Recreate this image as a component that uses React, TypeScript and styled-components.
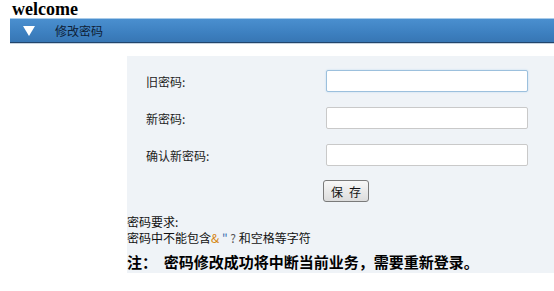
import React from 'react';
import styled, { createGlobalStyle } from 'styled-components';

const GlobalStyle = createGlobalStyle`
  html, body {
    margin: 0;
    padding: 0;
    background: #fff;
  }
  body {
    font-family: "Noto Sans CJK SC", "Liberation Sans", sans-serif;
    font-size: 12px;
    color: #222;
  }
`;

const Page = styled.div`
  width: 554px;
  height: 291px;
  overflow: hidden;
`;

const Title = styled.h1`
  margin: 0;
  padding: 0 0 0 12px;
  height: 18px;
  font-family: "Liberation Serif", serif;
  font-size: 18px;
  font-weight: bold;
  line-height: 18px;
  color: #000;
`;

const HeaderBar = styled.div`
  margin-left: 10px;
  height: 23px;
  display: flex;
  align-items: center;
  border-top: 1px solid #a9cbe9;
  border-bottom: 1px solid #22456b;
  background: linear-gradient(#4a8fcf, #3d80c0 60%, #3776b4);
  box-shadow: 0 1px 0 #c6d3e0;
`;

const Arrow = styled.span`
  width: 0;
  height: 0;
  margin-left: 13px;
  border-left: 6px solid transparent;
  border-right: 6px solid transparent;
  border-top: 10px solid #fff;
`;

const BarText = styled.span`
  margin-left: 20px;
  font-size: 12px;
  color: #0e2036;
  line-height: 23px;
`;

const Panel = styled.div`
  margin: 13px 0 0 127px;
  padding: 14px 0 2px 0;
  background: #eff3f7;
`;

const FormGrid = styled.div`
  display: grid;
  grid-template-columns: 180px 202px;
  row-gap: 15px;
  padding-left: 19px;
`;

const Label = styled.label`
  display: flex;
  align-items: center;
  height: 22px;
  font-size: 12px;
  color: #222;
`;

const Input = styled.input<{ $focused?: boolean }>`
  box-sizing: border-box;
  width: 202px;
  height: 22px;
  margin: 0;
  border: 1px solid ${(p) => (p.$focused ? '#9cc0dd' : '#c9c9c9')};
  border-radius: 2px;
  background: #fff;
  box-shadow: ${(p) => (p.$focused ? '0 0 2px #bcd7ee' : 'none')};
  outline: none;
`;

const ButtonRow = styled.div`
  display: flex;
  padding: 14px 0 0 196px;
`;

const SaveButton = styled.button`
  box-sizing: border-box;
  width: 46px;
  height: 22px;
  padding: 0;
  border: 1px solid #7a7a7a;
  border-radius: 3px;
  background: linear-gradient(#f8f8f8, #dcdcdc);
  font-family: "Noto Sans CJK SC", sans-serif;
  font-size: 12px;
  color: #111;
  letter-spacing: 6px;
  text-indent: 6px;
`;

const Notes = styled.div`
  margin-top: 12px;
  font-size: 12px;
  line-height: 16px;
  color: #111;
`;

const Sym = styled.span<{ $color: string }>`
  color: ${(p) => p.$color};
`;

const Warning = styled.p`
  margin: 7px 0 0;
  font-size: 15px;
  font-weight: bold;
  line-height: 18px;
  color: #000;
  white-space: pre;
`;

const fields = [
  { label: '旧密码:', focused: true },
  { label: '新密码:' },
  { label: '确认新密码:' },
];

export default function App() {
  return (
    <Page>
      <GlobalStyle />
      <Title>welcome</Title>
      <HeaderBar>
        <Arrow />
        <BarText>修改密码</BarText>
      </HeaderBar>
      <Panel>
        <FormGrid>
          {fields.map((f) => (
            <React.Fragment key={f.label}>
              <Label>{f.label}</Label>
              <Input type="password" $focused={f.focused} />
            </React.Fragment>
          ))}
        </FormGrid>
        <ButtonRow>
          <SaveButton>保存</SaveButton>
        </ButtonRow>
        <Notes>
          <div>密码要求:</div>
          <div>
            密码中不能包含<Sym $color="#d4820a">&amp;</Sym> <Sym $color="#3a6fb0">"</Sym> <Sym $color="#555">?</Sym> 和空格等字符
          </div>
        </Notes>
        <Warning>{'注：  密码修改成功将中断当前业务，需要重新登录。'}</Warning>
      </Panel>
    </Page>
  );
}
